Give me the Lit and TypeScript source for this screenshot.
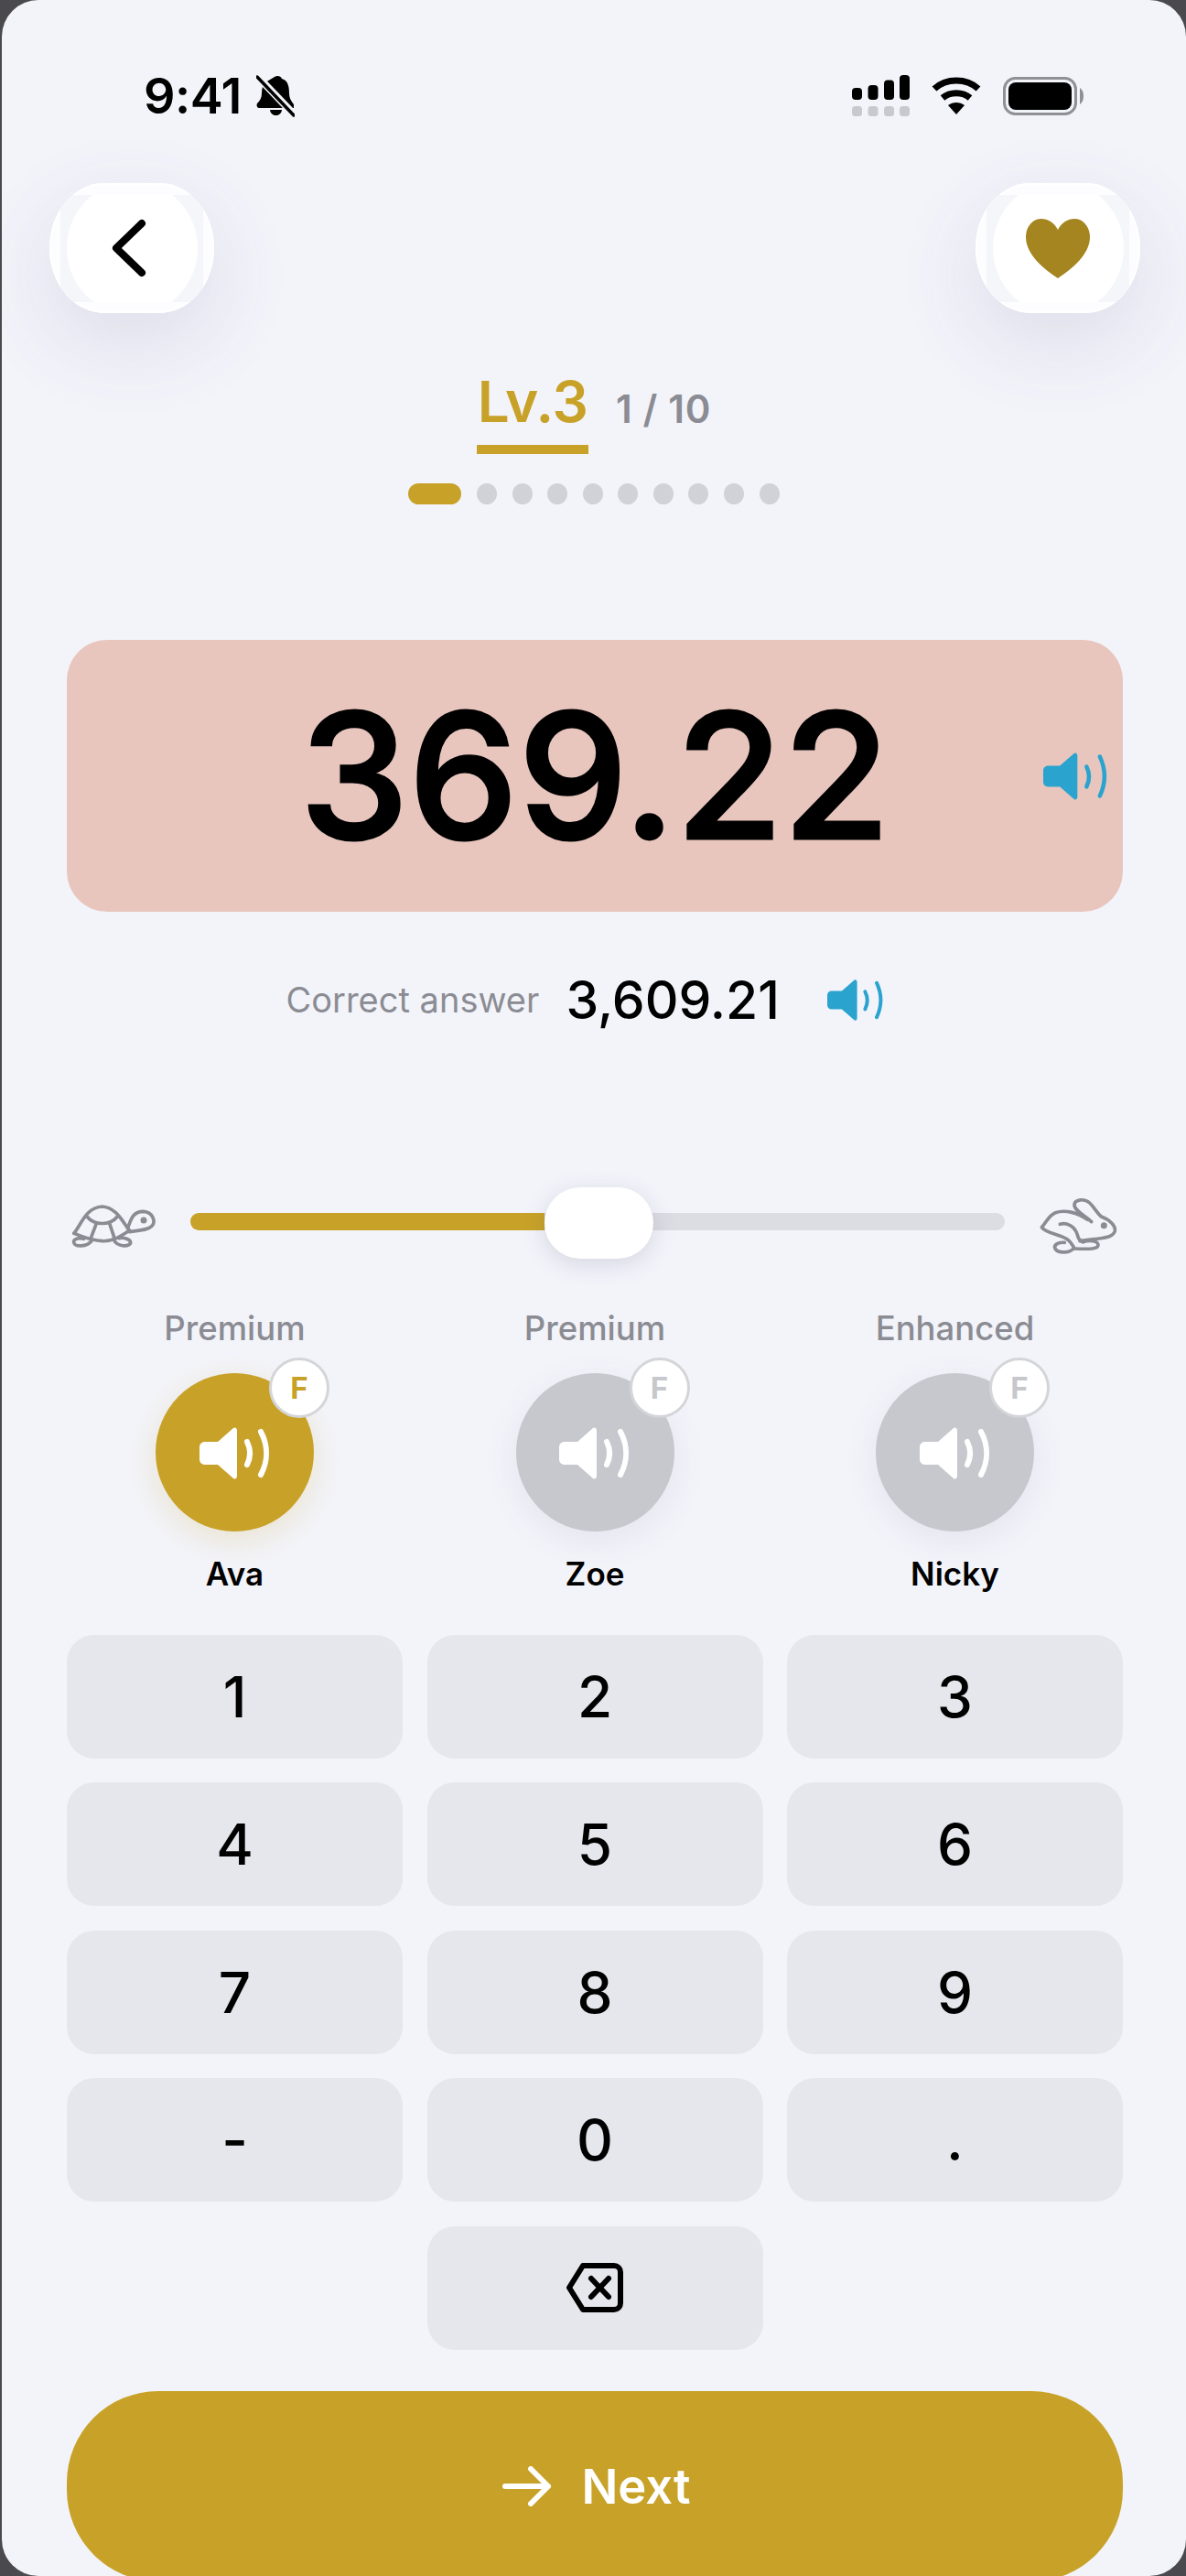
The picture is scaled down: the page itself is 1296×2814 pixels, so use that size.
import { LitElement, html, css, svg } from "lit";
import { customElement } from "lit/decorators.js";

const speaker = (thin: boolean) => html`<svg class="spk-svg" viewBox="0 0 78 57" fill="none">
  <path d="M37 1 C39 -0.5 41 1 41 4 V53 C41 56 39 57.5 37 56 L20 41 H6 C2.5 41 0 38.5 0 35 V22 C0 18.5 2.5 16 6 16 H20 Z" fill="currentColor"/>
  ${thin
    ? svg`<path d="M52 17 C56 25 56 33 52 41" stroke="currentColor" stroke-width="5" stroke-linecap="round"/><path d="M68 5 C75 20 75 37 68 52" stroke="currentColor" stroke-width="5" stroke-linecap="round"/>`
    : svg`<path d="M52 16 C56 24 56 33 52 41" stroke="currentColor" stroke-width="6" stroke-linecap="round"/><path d="M67 5 C75 20 75 37 67 52" stroke="currentColor" stroke-width="6" stroke-linecap="round"/>`}
</svg>`;

@customElement("app-root")
export class AppRoot extends LitElement {
  static styles = css`
    :host { display: block; width: 1296px; height: 2814px; overflow: hidden; background: #4a4a4e; font-family: Inter, "Liberation Sans", sans-serif; color: #000; }
    * { box-sizing: border-box; }
    .screen { width: 1294px; height: 2814px; margin-left: 2px; border-radius: 40px; background: #f3f4fa; overflow: hidden; display: flex; flex-direction: column; }

    .status { height: 200px; display: flex; align-items: flex-start; padding: 82px 0 0 155px; flex: none; }
    .time { font-size: 54px; font-weight: 600; line-height: 46px; letter-spacing: -0.5px; width: 123px; display: flex; height: 46px; }
    .bell { width: 42px; height: 46px; }
    .right { margin-left: auto; display: flex; padding-right: 112px; }
    .signal { width: 63px; height: 46px; margin-right: 24px; }
    .wifi { width: 54px; height: 46px; margin-right: 24px; }
    .batt { width: 88px; height: 46px; }

    .nav { height: 142px; display: flex; justify-content: space-between; padding: 0 50px 0 52px; flex: none; }
    .round { width: 180px; height: 142px; border-radius: 60px / 71px; background: #fdfdff; box-shadow: 0 30px 90px rgba(80, 80, 120, 0.14), inset 0 0 0 2px #fff; display: flex; align-items: center; justify-content: center; overflow: hidden; }
    .band { width: 156px; height: 117px; background: #f5f6fa; display: flex; align-items: center; justify-content: center; overflow: hidden; flex: none; }
    .disc { width: 143px; height: 146px; border-radius: 50%; background: #fff; display: flex; align-items: center; justify-content: center; flex: none; }
    .chev { width: 50px; height: 72px; margin-left: -8px; }
    .heart { width: 70px; height: 65px; margin-left: 0; }

    .level { display: flex; justify-content: center; align-items: flex-start; gap: 30px; margin-top: 67px; flex: none; }
    .lv { color: #c8a228; font-size: 62px; font-weight: 600; line-height: 60px; border-bottom: 10px solid #c8a228; width: 122px; height: 87px; letter-spacing: -0.4px; text-align: center; white-space: nowrap; }
    .count { color: #8b8c93; font-size: 42px; font-weight: 600; line-height: 76px; letter-spacing: 0.6px; }
    .dots { display: flex; justify-content: center; gap: 16.6px; margin-top: 32px; height: 23px; flex: none; }
    .dots i { display: block; width: 22px; height: 23px; border-radius: 50%; background: #d1d2d7; }
    .dots i.on { width: 58px; border-radius: 12px; background: #c8a228; }

    .card { margin: 148px 69px 0 71px; height: 297px; border-radius: 44px; background: #e8c6be; display: flex; align-items: center; justify-content: center; position: relative; flex: none; }
    .big { font-size: 190px; font-weight: 500; -webkit-text-stroke: 3px #000; line-height: 1; letter-spacing: 0; margin-top: -2px; }
    .card .spk { position: absolute; right: 16px; top: 121px; width: 71px; height: 56px; color: #2aa3cf; display: flex; }
    .spk-svg { width: 100%; height: 100%; display: block; }

    .answer { display: flex; justify-content: center; align-items: center; height: 60px; margin-top: 66px; padding-right: 20px; flex: none; }
    .answer .lbl { color: #8b8c93; font-size: 38px; font-weight: 400; width: 306px; white-space: nowrap; }
    .answer .val { font-size: 57px; font-weight: 500; width: 285px; white-space: nowrap; }
    .answer .spk { width: 62px; height: 47px; color: #2aa3cf; display: flex; }

    .slider { display: flex; align-items: center; margin-top: 172px; height: 80px; padding-left: 58px; flex: none; }
    .turtle, .rabbit { width: 120px; height: 80px; flex: none; }
    .track { width: 890px; height: 19px; margin-left: 28px; border-radius: 10px; background: #dcdce3; position: relative; flex: none; margin-right: 22px; }
    .fill { height: 19px; border-radius: 10px 0 0 10px; background: #c8a228; }
    .thumb { position: absolute; top: -28px; height: 78px; width: 119px; border-radius: 40px; background: #fff; box-shadow: 0 6px 24px rgba(80, 80, 110, 0.18); }

    .voices { display: grid; grid-template-columns: repeat(3, 1fr); column-gap: 26.5px; margin: 57px 69px 0 71px; flex: none; }
    .voice { display: flex; flex-direction: column; align-items: center; }
    .tier { color: #8b8c93; font-size: 36.5px; font-weight: 500; line-height: 40px; height: 40px; white-space: nowrap; }
    .circle { margin-top: 29px; width: 173px; height: 173px; border-radius: 50%; background: #c7c8cd; color: #fff; display: flex; align-items: center; justify-content: center; position: relative; box-shadow: 0 10px 36px rgba(100, 100, 130, 0.1); }
    .circle.on { background: #c8a228; box-shadow: 0 10px 36px rgba(200, 162, 40, 0.2); }
    .circle .ico { width: 78px; height: 57px; display: flex; margin-top: 2px; }
    .badge { position: absolute; top: -17px; right: -17px; width: 66px; height: 66px; border-radius: 50%; background: #fff; border: 3px solid #d4d5d9; color: #c7c8cd; font-size: 33px; font-weight: 700; display: flex; align-items: center; justify-content: center; }
    .circle.on .badge { color: #c8a228; }
    .name { font-size: 35px; font-weight: 600; line-height: 40px; margin-top: 26px; height: 40px; }

    .keys { display: grid; grid-template-columns: repeat(3, 1fr); column-gap: 26.5px; row-gap: 26.4px; margin: 47px 69px 0 71px; flex: none; }
    .key { height: 135px; border-radius: 30px; background: #e6e7ec; display: flex; align-items: center; justify-content: center; font-size: 62px; font-weight: 500; }
    .key svg { width: 62px; height: 56px; }
    .key.mid { grid-column: 2; }

    .next { margin: 45px 69px 0 71px; height: 208px; border-radius: 100px; background: #c8a228; color: #fff; display: flex; align-items: center; justify-content: center; gap: 32px; font-size: 52.5px; font-weight: 600; flex: none; padding-left: 4px; }
    .next svg { width: 54px; height: 44px; }
  `;

  render() {
    const keys = ["1", "2", "3", "4", "5", "6", "7", "8", "9", "-", "0", "."];
    const voices = [
      { tier: "Premium", name: "Ava", on: true },
      { tier: "Premium", name: "Zoe", on: false },
      { tier: "Enhanced", name: "Nicky", on: false },
    ];
    return html`<div class="screen">
      <div class="status">
        <div class="time">9:41</div>
        <svg class="bell" viewBox="0 0 42 46" fill="none">
          <path d="M20 2 C23 0 27 1 28 4 C35 6 36 13 36 20 C36 25 38 28 41 32 L41 36 H3 C1 36 0 33 1 31 C4 28 6 25 6 20 C6 15 7 11 10 8 Z" fill="#000"/>
          <path d="M15 38 H28 C27 46 16 46 15 38 Z" fill="#000"/>
          <path d="M0 0 L44 46" stroke="#f3f4fa" stroke-width="8"/>
          <path d="M1 2 L41 44" stroke="#000" stroke-width="3.5" stroke-linecap="round"/>
        </svg>
        <div class="right">
          <svg class="signal" viewBox="0 0 63 46">
            <rect x="0" y="14" width="11" height="13" rx="4" fill="#000"/>
            <rect x="17.5" y="11" width="11" height="16" rx="4" fill="#000"/>
            <rect x="35" y="5.5" width="11" height="21.5" rx="4" fill="#000"/>
            <rect x="52" y="0" width="11" height="27" rx="4" fill="#000"/>
            <rect x="0" y="34" width="11" height="11" rx="3.5" fill="#c8c9ce"/>
            <rect x="17.5" y="34" width="11" height="11" rx="3.5" fill="#c8c9ce"/>
            <rect x="35" y="34" width="11" height="11" rx="3.5" fill="#c8c9ce"/>
            <rect x="52" y="34" width="11" height="11" rx="3.5" fill="#c8c9ce"/>
          </svg>
          <svg class="wifi" viewBox="0 0 54 46" fill="none">
            <path d="M3 15 C16 3 38 3 51 15" stroke="#000" stroke-width="7"/>
            <path d="M12 25 C20 18 34 18 42 25" stroke="#000" stroke-width="7"/>
            <path d="M18 33 C23 29 31 29 36 33 L27 43 Z" fill="#000"/>
          </svg>
          <svg class="batt" viewBox="0 0 88 46" fill="none">
            <rect x="1.5" y="3.5" width="78" height="39" rx="12" stroke="#8f9096" stroke-width="3"/>
            <rect x="6" y="8" width="69" height="30" rx="8" fill="#000"/>
            <path d="M84 14 C87 16 88 19 88 23 C88 27 87 30 84 32 Z" fill="#8f9096"/>
          </svg>
        </div>
      </div>

      <div class="nav">
        <div class="round"><div class="band"><div class="disc">
          <svg class="chev" viewBox="0 0 50 72" fill="none"><path d="M40 9 L12 36 L40 63" stroke="#000" stroke-width="8" stroke-linecap="round" stroke-linejoin="round"/></svg>
        </div></div></div>
        <div class="round"><div class="band"><div class="disc">
          <svg class="heart" viewBox="0 0 70 65"><path d="M35 12 C39 4 46 0 53 0 C63 0 70 9 70 20 C70 39 50 55 35 65 C20 55 0 39 0 20 C0 9 7 0 17 0 C24 0 31 4 35 12 Z" fill="#a5851f"/></svg>
        </div></div></div>
      </div>

      <div class="level">
        <div class="lv">Lv.3</div>
        <div class="count">1 / 10</div>
      </div>
      <div class="dots">
        <i class="on"></i>${Array.from({ length: 9 }, () => html`<i></i>`)}
      </div>

      <div class="card">
        <div class="big">369.22</div>
        <div class="spk">${speaker(true)}</div>
      </div>

      <div class="answer">
        <div class="lbl">Correct answer</div>
        <div class="val">3,609.21</div>
        <div class="spk">${speaker(true)}</div>
      </div>

      <div class="slider">
        <svg class="turtle" viewBox="0 0 360 240" fill="none" stroke="#8b8c93" stroke-width="11" stroke-linecap="round" stroke-linejoin="round">
          <path d="M62 160 C85 135 100 75 155 72 C205 75 225 130 245 150 C215 170 190 187 155 185 C115 183 90 170 62 160 Z"/>
          <path d="M105 105 C130 135 180 135 205 105"/>
          <path d="M135 130 L118 175 M180 130 L195 175"/>
          <path d="M238 143 C248 125 250 88 290 88 C320 90 332 120 318 136 C305 150 275 150 245 155"/>
          <path d="M95 178 C70 172 60 182 62 190 C66 205 105 205 120 185"/>
          <path d="M192 180 C205 205 240 205 248 192 C250 180 225 172 210 176"/>
          <circle cx="291" cy="117" r="5" fill="#8b8c93"/>
        </svg>
        <div class="track">
          <div class="fill" style="width: 387px"></div>
          <div class="thumb" style="left: 387px"></div>
        </div>
        <svg class="rabbit" viewBox="0 0 360 240" fill="none" stroke="#8b8c93" stroke-width="11" stroke-linecap="round" stroke-linejoin="round">
          <path d="M218 122 C195 100 160 85 162 65 C165 48 195 45 212 60 C228 75 235 92 250 105 C278 115 298 135 295 152 C290 172 262 174 235 178 C215 180 200 182 180 185"/>
          <path d="M205 115 C170 90 130 82 100 92 C78 100 70 125 55 140 C65 155 95 160 125 172 C145 180 150 190 160 205"/>
          <path d="M115 130 C140 122 165 140 172 165 C175 178 180 185 190 188"/>
          <path d="M190 188 C215 180 240 185 240 198 C240 212 215 212 160 210"/>
          <path d="M130 190 C105 188 92 200 100 212 C110 226 150 225 160 208"/>
          <circle cx="259" cy="134" r="5" fill="#8b8c93"/>
        </svg>
      </div>

      <div class="voices">
        ${voices.map(
          (v) => html`<div class="voice">
            <div class="tier">${v.tier}</div>
            <div class="circle ${v.on ? "on" : ""}">
              <div class="ico">${speaker(false)}</div>
              <div class="badge">F</div>
            </div>
            <div class="name">${v.name}</div>
          </div>`
        )}
      </div>

      <div class="keys">
        ${keys.map((k) => html`<div class="key">${k}</div>`)}
        <div class="key mid">
          <svg viewBox="0 0 62 56" fill="none" stroke="#000" stroke-linecap="round" stroke-linejoin="round">
            <path d="M18 4 H52 C56 4 59 7 59 11 V45 C59 49 56 52 52 52 H18 L3 28 Z" stroke-width="6"/>
            <path d="M27 18 L46 38 M46 18 L27 38" stroke-width="6"/>
          </svg>
        </div>
      </div>

      <div class="next">
        <svg viewBox="0 0 54 44" fill="none" stroke="#fff" stroke-width="6" stroke-linecap="round" stroke-linejoin="round"><path d="M3 22 H50 M31 3 L50 22 L31 41"/></svg>
        <span>Next</span>
      </div>
    </div>`;
  }
}
